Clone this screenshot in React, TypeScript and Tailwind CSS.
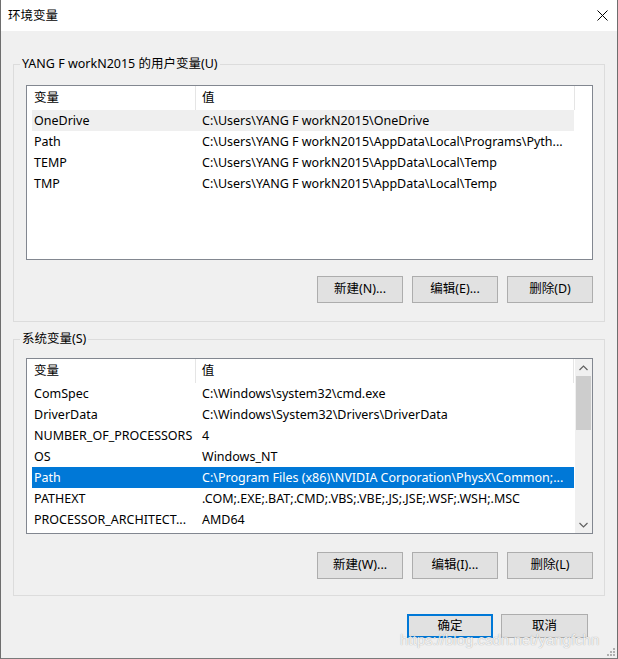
import React from "react";

const FONT = "font-['Noto_Sans','Noto_Sans_CJK_SC',sans-serif]";

type RowT = { name: string; value: string; state?: "hover" | "sel" };

const userRows: RowT[] = [
  { name: "OneDrive", value: "C:\\Users\\YANG F workN2015\\OneDrive", state: "hover" },
  { name: "Path", value: "C:\\Users\\YANG F workN2015\\AppData\\Local\\Programs\\Pyth..." },
  { name: "TEMP", value: "C:\\Users\\YANG F workN2015\\AppData\\Local\\Temp" },
  { name: "TMP", value: "C:\\Users\\YANG F workN2015\\AppData\\Local\\Temp" },
];

const sysRows: RowT[] = [
  { name: "ComSpec", value: "C:\\Windows\\system32\\cmd.exe" },
  { name: "DriverData", value: "C:\\Windows\\System32\\Drivers\\DriverData" },
  { name: "NUMBER_OF_PROCESSORS", value: "4" },
  { name: "OS", value: "Windows_NT" },
  { name: "Path", value: "C:\\Program Files (x86)\\NVIDIA Corporation\\PhysX\\Common;...", state: "sel" },
  { name: "PATHEXT", value: ".COM;.EXE;.BAT;.CMD;.VBS;.VBE;.JS;.JSE;.WSF;.WSH;.MSC" },
  { name: "PROCESSOR_ARCHITECT...", value: "AMD64" },
];

function Header() {
  return (
    <div className="flex h-[24px] shrink-0 items-stretch">
      <div className="w-[163px] pl-[2px] leading-[24px]">变量</div>
      <div className="w-px bg-[#e5e5e5]" />
      <div className="w-[378px] pl-[6px] leading-[24px]">值</div>
      <div className="w-px bg-[#e5e5e5]" />
    </div>
  );
}

function Row({ r }: { r: RowT }) {
  const cls =
    r.state === "sel"
      ? "bg-[#0078d7] text-white"
      : r.state === "hover"
      ? "bg-[#efefef] text-black"
      : "text-black";
  return (
    <div className={`flex h-[21px] w-[542px] shrink-0 leading-[21px] ${cls}`}>
      <div className="w-[168px] shrink-0 overflow-hidden whitespace-nowrap pl-[2px]">{r.name}</div>
      <div className="flex-1 overflow-hidden whitespace-nowrap pl-[2px]">{r.value}</div>
    </div>
  );
}

function Chevron({ up }: { up?: boolean }) {
  return (
    <svg width="9" height="6" viewBox="0 0 9 6" className="block">
      <path
        d={up ? "M0.5 5 L4.5 1 L8.5 5" : "M0.5 1 L4.5 5 L8.5 1"}
        fill="none"
        stroke="#606060"
        strokeWidth="1.2"
      />
    </svg>
  );
}

function Scrollbar() {
  return (
    <div className="ml-px flex w-[17px] shrink-0 flex-col bg-[#f0f0f0]">
      <div className="flex h-[17px] items-center justify-center">
        <Chevron up />
      </div>
      <div className="mr-px ml-px h-[54px] bg-[#cdcdcd]" />
      <div className="flex-1" />
      <div className="flex h-[17px] items-center justify-center">
        <Chevron />
      </div>
    </div>
  );
}

function Btn({ label, w = "w-[86px]", h = "h-[27px]", primary }: { label: string; w?: string; h?: string; primary?: boolean }) {
  return (
    <div
      className={`${w} ${h} flex items-center justify-center bg-[#e1e1e1] text-black ${
        primary ? "border-2 border-[#0078d7]" : "border border-[#adadad]"
      }`}
    >
      {label}
    </div>
  );
}

function Group({
  label,
  rows,
  listH,
  pt,
  mt,
  btnMt,
  pb,
  scroll,
  buttons,
}: {
  label: string;
  rows: RowT[];
  listH: string;
  pt: string;
  mt: string;
  btnMt: string;
  pb: string;
  scroll?: boolean;
  buttons: string[];
}) {
  return (
    <div className={`relative border border-[#dcdcdc] pl-[12px] pr-[11px] ${mt} ${pt} ${pb}`}>
      <div className="absolute left-[6px] top-[-9px] bg-[#f0f0f0] px-[2px] leading-[16px]">{label}</div>
      <div className={`flex border border-[#828790] bg-white ${listH}`}>
        <div className="flex flex-col overflow-hidden pl-[5px]">
          <Header />
          {rows.map((r, i) => (
            <Row key={i} r={r} />
          ))}
        </div>
        {scroll ? <Scrollbar /> : null}
      </div>
      <div className={`flex justify-end gap-[9px] ${btnMt}`}>
        {buttons.map((b) => (
          <Btn key={b} label={b} />
        ))}
      </div>
    </div>
  );
}

export default function App() {
  return (
    <div
      className={`relative flex h-[659px] w-[618px] flex-col border-x border-b border-x-[#6e6e6e] border-b-[#7a7a7a] bg-[#f0f0f0] text-[12.5px] text-black ${FONT}`}
    >
      <div className="flex h-[31px] shrink-0 items-center justify-between bg-white pl-[7px] pr-[9px]">
        <span className="leading-[16px]">环境变量</span>
        <svg width="11" height="11" viewBox="0 0 11 11">
          <path d="M0.5 0.5 L10.5 10.5 M10.5 0.5 L0.5 10.5" stroke="#000" strokeWidth="1" />
        </svg>
      </div>
      <div className="flex flex-col px-[12px]">
        <Group
          label="YANG F workN2015 的用户变量(U)"
          rows={userRows}
          listH="h-[175px]"
          mt="mt-[33px]"
          pt="pt-[20px]"
          btnMt="mt-[16px]"
          pb="pb-[18px]"
          buttons={["新建(N)...", "编辑(E)...", "删除(D)"]}
        />
        <Group
          label="系统变量(S)"
          rows={sysRows}
          listH="h-[176px]"
          mt="mt-[17px]"
          pt="pt-[18px]"
          btnMt="mt-[18px]"
          pb="pb-[16px]"
          scroll
          buttons={["新建(W)...", "编辑(I)...", "删除(L)"]}
        />
        <div className="mt-[18px] flex justify-end gap-[8px] pr-[17px]">
          <Btn label="确定" h="h-[24px]" primary />
          <Btn label="取消" h="h-[24px]" w="w-[87px]" />
        </div>
      </div>
      <div className="pointer-events-none absolute left-[399px] top-[630px] font-['Liberation_Sans',sans-serif] text-[15px] leading-[20px] text-white/85 [text-shadow:0_0_1px_rgba(0,0,0,0.4)]">
        https://blog.csdn.net/yangfchn
      </div>
      <svg className="absolute bottom-[2px] right-[2px]" width="8" height="8" viewBox="0 0 8 8">
        <rect x="6" y="0" width="2" height="2" fill="#b0b0b0" />
        <rect x="3" y="3" width="2" height="2" fill="#b0b0b0" />
        <rect x="6" y="3" width="2" height="2" fill="#b0b0b0" />
        <rect x="0" y="6" width="2" height="2" fill="#b0b0b0" />
        <rect x="3" y="6" width="2" height="2" fill="#b0b0b0" />
        <rect x="6" y="6" width="2" height="2" fill="#b0b0b0" />
      </svg>
    </div>
  );
}
